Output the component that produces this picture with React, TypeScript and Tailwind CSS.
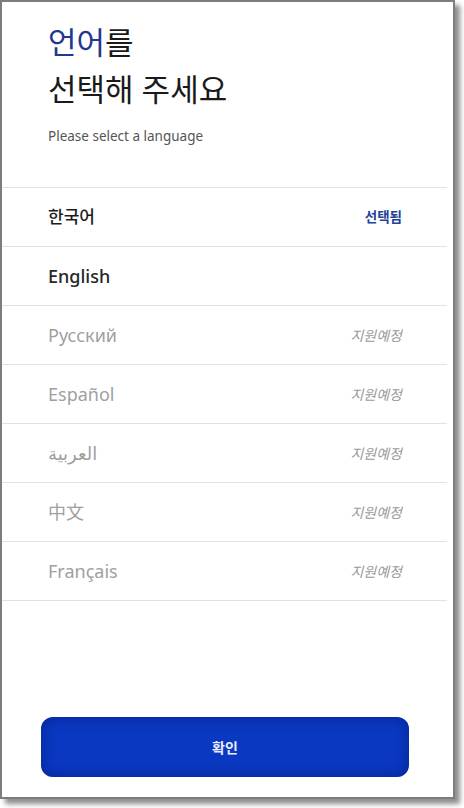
import React from 'react';

const languages = [
  { name: '한국어', state: 'selected' },
  { name: 'English', state: 'available' },
  { name: 'Русский', state: 'soon' },
  { name: 'Español', state: 'soon' },
  { name: 'العربية', state: 'soon' },
  { name: '中文', state: 'soon' },
  { name: 'Français', state: 'soon' },
];

function LanguageRow({ name, state }: { name: string; state: string }) {
  const nameClass =
    state === 'selected'
      ? 'text-[17px] font-medium text-[#1c1c1c]'
      : state === 'available'
        ? 'text-[18px] font-medium text-[#262626]'
        : 'text-[18px] text-[#a0a0a0]';

  return (
    <div className="flex h-[59px] items-center justify-between border-b border-[#e2e2e2] pl-[46px] pr-[45px]">
      <span className={nameClass}>{name}</span>
      {state === 'selected' && (
        <span className="text-[13.5px] font-bold text-[#23409a]">선택됨</span>
      )}
      {state === 'soon' && (
        <span className="text-[14px] italic text-[#9a9a9a]">지원예정</span>
      )}
    </div>
  );
}

export default function App() {
  return (
    <div
      className="h-[808px] w-[464px] bg-white"
      style={{ fontFamily: '"Noto Sans", "Noto Sans CJK KR", "Noto Sans CJK SC", "DejaVu Sans", sans-serif' }}
    >
      <div className="flex h-[799px] w-[455px] flex-col border-2 border-[#7d7d7d] bg-white shadow-[5px_5px_5px_rgba(0,0,0,0.45)]">
        <div className="pl-[46px] pt-[17px]">
          <h1 className="text-[31px] leading-[47px] font-normal text-[#1a1a1a]">
            <span className="text-[#24378f]">언어</span>를
            <br />
            선택해 주세요
          </h1>
          <p className="mt-[15px] text-[13.5px] leading-[16px] text-[#555]">Please select a language</p>
        </div>

        <div className="mt-[43px] mr-[6px] border-t border-[#e2e2e2]">
          {languages.map((l) => (
            <LanguageRow key={l.name} name={l.name} state={l.state} />
          ))}
        </div>

        <div className="flex-1" />

        <div className="pl-[39px] pb-[20px]">
          <button className="flex h-[60px] w-[368px] items-center justify-center rounded-[12px] bg-[#0a38c0] text-[14px] font-semibold text-[#e8ecff] shadow-[inset_0_0_14px_rgba(0,20,110,0.55)]">
            확인
          </button>
        </div>
      </div>
    </div>
  );
}
